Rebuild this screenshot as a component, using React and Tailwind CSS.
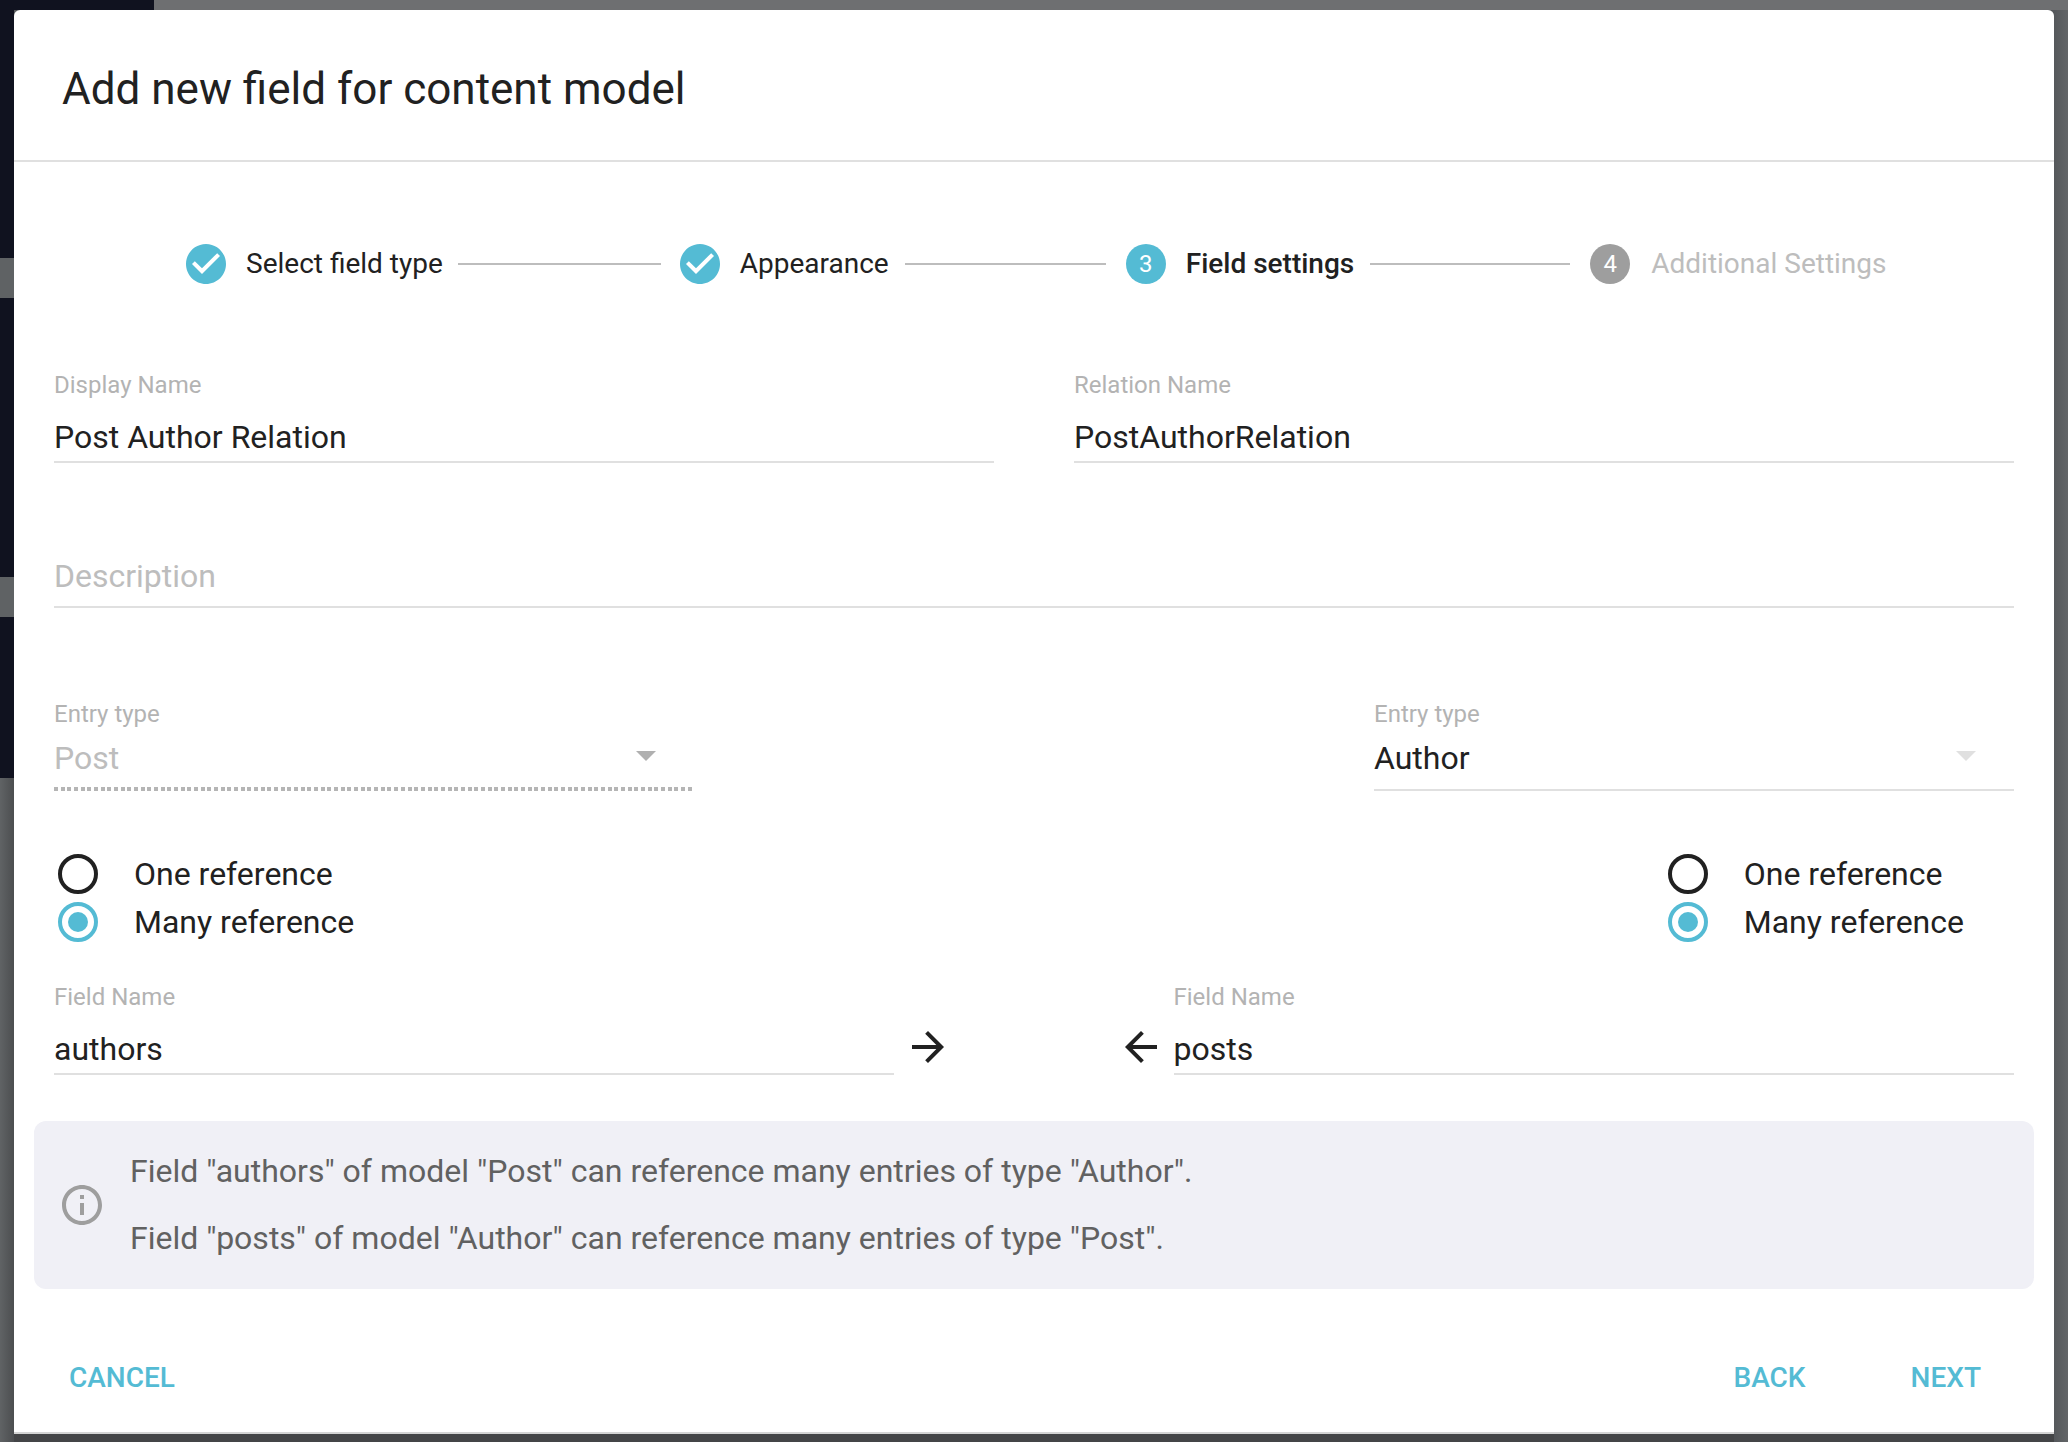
import React from 'react'

const checkPath = "M12 2C6.48 2 2 6.48 2 12s4.48 10 10 10 10-4.48 10-10S17.52 2 12 2zm-2 15l-5-5 1.41-1.41L10 14.17l7.59-7.59L19 8l-9 9z"

function StepCheck() {
    return (
        <svg viewBox="2 2 20 20" className="w-[40px] h-[40px] shrink-0 fill-[#54bbd4]">
            <path d={checkPath} />
        </svg>
    )
}

function StepNumber({n, active}) {
    return (
        <div className={active
            ? "w-[40px] h-[40px] shrink-0 rounded-full bg-[#54bbd4] text-white text-[24px] flex items-center justify-center"
            : "w-[40px] h-[40px] shrink-0 rounded-full bg-[#9e9e9e] text-white text-[24px] flex items-center justify-center"}>
            {n}
        </div>
    )
}

function Stepper() {
    return (
        <div className="mt-[82px] h-[40px] flex items-center pl-[172px] text-[28px] leading-[40px]">
            <StepCheck />
            <span className="ml-[20px] text-[#212121]">Select field type</span>
            <div className="w-[203px] h-[2px] bg-[#bdbdbd] ml-[15px] mr-[19px]" />
            <StepCheck />
            <span className="ml-[20px] text-[#212121]">Appearance</span>
            <div className="w-[201px] h-[2px] bg-[#bdbdbd] ml-[16px] mr-[20px]" />
            <StepNumber n="3" active />
            <span className="ml-[20px] text-[#212121] font-medium">Field settings</span>
            <div className="w-[200px] h-[2px] bg-[#bdbdbd] ml-[16px] mr-[20px]" />
            <StepNumber n="4" />
            <span className="ml-[21px] text-[#bdbdbd]">Additional Settings</span>
        </div>
    )
}

function Field({label, value, className}) {
    return (
        <div className={className}>
            <div className="h-[32px] text-[24px] leading-[32px] text-[#b3b3b3]">{label}</div>
            <div className="mt-[12px] h-[48px] text-[32px] leading-[48px] text-[#212121] border-b-2 border-[#e0e0e0] box-content">{value}</div>
        </div>
    )
}

function Caret({color}) {
    return (
        <svg viewBox="0 0 20 10" className={"w-[20px] h-[10px] mr-[38px] mb-[4px] " + color}>
            <path d="M0 0h20L10 10z" />
        </svg>
    )
}

function Radio({checked, label}) {
    return (
        <div className="h-[48px] flex items-center">
            {checked ? (
                <div className="w-[40px] h-[40px] rounded-full border-[4px] border-[#54bbd4] flex items-center justify-center">
                    <div className="w-[20px] h-[20px] rounded-full bg-[#54bbd4]" />
                </div>
            ) : (
                <div className="w-[40px] h-[40px] rounded-full border-[4px] border-[#212121]" />
            )}
            <span className="ml-[36px] text-[32px] leading-[48px] text-[#212121]">{label}</span>
        </div>
    )
}

function ArrowIcon({flip}) {
    return (
        <svg viewBox="4 4 16 16" className={flip ? "w-[32px] h-[32px] rotate-180 fill-[#212121]" : "w-[32px] h-[32px] fill-[#212121]"}>
            <path d="M12 4l-1.41 1.41L16.17 11H4v2h12.17l-5.58 5.59L12 20l8-8z" />
        </svg>
    )
}

function App() {
    return (
        <div className="relative w-[2068px] h-[1442px] overflow-hidden bg-[#55585b] font-['Roboto',sans-serif] pt-[10px] pl-[14px]">
            {/* whatever sits behind the dimmed backdrop */}
            <div className="absolute left-0 top-0 w-full h-[10px] bg-[#6e6f71]" />
            <div className="absolute left-0 top-0 w-[154px] h-[10px] bg-[#10121f]" />
            <div className="absolute left-0 top-0 w-[14px] h-[778px] bg-[#10121f]" />
            <div className="absolute left-0 top-[258px] w-[14px] h-[40px] bg-[#5f6264]" />
            <div className="absolute left-0 top-[577px] w-[14px] h-[40px] bg-[#5f6264]" />
            <div className="absolute left-0 top-[778px] bottom-0 w-[14px] bg-linear-to-r from-[#606365] to-[#4c4e50]" />
            <div className="absolute right-0 top-[10px] bottom-0 w-[14px] bg-linear-to-r from-[#55585b] to-[#626567]" />
            <div className="absolute left-[14px] right-[14px] bottom-0 h-[8px] bg-[#444547]" />

            <div className="relative w-[2040px] h-[1422px] bg-white rounded-t-[6px] border-b-2 border-[#d4d4d4] box-content flex flex-col">
                <div className="h-[143px] px-[48px] pt-[7px] flex items-center border-b-2 border-[#e0e0e0] box-content">
                    <h1 className="text-[44px] text-[#212121] leading-[60px]">Add new field for content model</h1>
                </div>

                <Stepper />

                <div className="px-[40px]">
                    <div className="mt-[85px] flex justify-between">
                        <Field className="w-[940px]" label="Display Name" value="Post Author Relation" />
                        <Field className="w-[940px]" label="Relation Name" value="PostAuthorRelation" />
                    </div>

                    <div className="mt-[89px] h-[48px] text-[32px] leading-[48px] text-[#bdbdbd] box-content pb-[6px] border-b-2 border-[#e0e0e0]">Description</div>

                    <div className="mt-[90px] flex justify-between">
                        <div className="w-[640px]">
                            <div className="h-[32px] text-[24px] leading-[32px] text-[#b3b3b3]">Entry type</div>
                            <div className="mt-[4px] h-[48px] flex items-center justify-between text-[32px] leading-[48px] text-[#bdbdbd]">
                                <span>Post</span>
                                <Caret color="fill-[#b0b0b0]" />
                            </div>
                            <div className="mt-[5px] h-[4px] bg-[repeating-linear-gradient(90deg,#b5b5b5_0,#b5b5b5_4px,transparent_4px,transparent_6.67px)]" />
                        </div>
                        <div className="w-[640px]">
                            <div className="h-[32px] text-[24px] leading-[32px] text-[#b3b3b3]">Entry type</div>
                            <div className="mt-[4px] h-[48px] flex items-center justify-between text-[32px] leading-[48px] text-[#212121]">
                                <span>Author</span>
                                <Caret color="fill-[#e0e0e0]" />
                            </div>
                            <div className="mt-[7px] h-[2px] bg-[#e0e0e0]" />
                        </div>
                    </div>

                    <div className="mt-[59px] flex justify-between pl-[4px]">
                        <div>
                            <Radio label="One reference" />
                            <Radio checked label="Many reference" />
                        </div>
                        <div className="pr-[50px]">
                            <Radio label="One reference" />
                            <Radio checked label="Many reference" />
                        </div>
                    </div>

                    <div className="mt-[35px] flex items-end">
                        <Field className="w-[840px]" label="Field Name" value="authors" />
                        <div className="ml-[18px] mb-[12px]"><ArrowIcon /></div>
                        <div className="ml-[181px] mb-[12px]"><ArrowIcon flip /></div>
                        <Field className="ml-[17px] w-[841px]" label="Field Name" value="posts" />
                    </div>
                </div>

                <div className="mx-[20px] mt-[46px] h-[168px] rounded-[12px] bg-[#f0f0f6] flex items-center">
                    <svg viewBox="2 2 20 20" className="ml-[28px] w-[40px] h-[40px] shrink-0 fill-[#9e9e9e]">
                        <path d="M11 7h2v2h-2zm0 4h2v6h-2zm1-9C6.48 2 2 6.48 2 12s4.48 10 10 10 10-4.48 10-10S17.52 2 12 2zm0 18c-4.41 0-8-3.59-8-8s3.59-8 8-8 8 3.59 8 8-3.59 8-8 8z" />
                    </svg>
                    <div className="ml-[28px] mb-[2px] text-[32px] leading-[48px] text-[#616161]">
                        <p>Field "authors" of model "Post" can reference many entries of type "Author".</p>
                        <p className="mt-[19px]">Field "posts" of model "Author" can reference many entries of type "Post".</p>
                    </div>
                </div>

                <div className="mt-[65px] h-[48px] px-[55px] flex items-center justify-between text-[28px] font-medium text-[#54bbd4]">
                    <span>CANCEL</span>
                    <div className="flex gap-[105px] pr-[18px]">
                        <span>BACK</span>
                        <span>NEXT</span>
                    </div>
                </div>
            </div>
        </div>
    )
}

export default App
